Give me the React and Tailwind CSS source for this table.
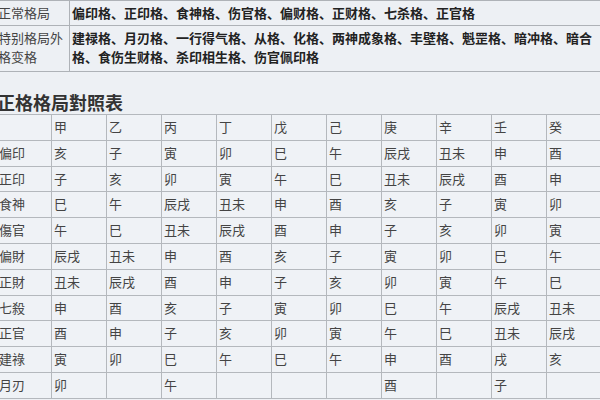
import React from 'react'

const font = { fontFamily: '"Noto Sans CJK SC", "Noto Sans CJK TC", sans-serif' }

const head = ['', '甲', '乙', '丙', '丁', '戊', '己', '庚', '辛', '壬', '癸']

const rows = [
  ['偏印', '亥', '子', '寅', '卯', '巳', '午', '辰戌', '丑未', '申', '酉'],
  ['正印', '子', '亥', '卯', '寅', '午', '巳', '丑未', '辰戌', '酉', '申'],
  ['食神', '巳', '午', '辰戌', '丑未', '申', '酉', '亥', '子', '寅', '卯'],
  ['傷官', '午', '巳', '丑未', '辰戌', '酉', '申', '子', '亥', '卯', '寅'],
  ['偏財', '辰戌', '丑未', '申', '酉', '亥', '子', '寅', '卯', '巳', '午'],
  ['正財', '丑未', '辰戌', '酉', '申', '子', '亥', '卯', '寅', '午', '巳'],
  ['七殺', '申', '酉', '亥', '子', '寅', '卯', '巳', '午', '辰戌', '丑未'],
  ['正官', '酉', '申', '子', '亥', '卯', '寅', '午', '巳', '丑未', '辰戌'],
  ['建祿', '寅', '卯', '巳', '午', '巳', '午', '申', '酉', '戌', '亥'],
  ['月刃', '卯', '', '午', '', '', '', '酉', '', '子', ''],
]

const App = () => {
  return (
    <div className="w-[600px] h-[400px] overflow-hidden bg-[#edf0f4] text-[#444]" style={font}>
      <div className="-ml-[4px] w-[606px]">
        {/* top table */}
        <div className="grid grid-cols-[74px_1fr] border-t border-[#aeb2b7] text-[13px]">
          <div className="h-[25px] pl-[2px] leading-[24px] border-b border-r border-[#aeb2b7]">正常格局</div>
          <div className="h-[25px] pl-[2px] leading-[24px] border-b border-[#aeb2b7] font-bold text-[#222] pr-[4px]">
            偏印格、正印格、食神格、伤官格、偏财格、正财格、七杀格、正官格
          </div>
          <div className="h-[46px] pl-[2px] pr-[2px] pt-[2px] leading-[19px] border-b border-r border-[#aeb2b7]">特别格局外格变格</div>
          <div className="h-[46px] pl-[2px] pr-[2px] pt-[2px] leading-[19px] border-b border-[#aeb2b7] font-bold text-[#222]">
            建禄格、月刃格、一行得气格、从格、化格、两神成象格、丰壁格、魁罡格、暗冲格、暗合格、食伤生财格、杀印相生格、伤官佩印格
          </div>
        </div>

        {/* title */}
        <h2 className="mt-[19px] h-[23px] text-[18px] leading-[22px] font-semibold text-[#333] pl-[1px]">正格格局對照表</h2>

        {/* bottom table */}
        <div className="grid grid-cols-11 auto-rows-[25.8px] border-t border-l border-[#b4b8bd] text-[13px]">
          {[head, ...rows].map((row, i) =>
            row.map((cell, j) => (
              <div
                key={i + '-' + j}
                className="border-r border-b border-[#b4b8bd] pl-[2px] pt-[3px] leading-[17px] text-[#444] bg-[#eff2f6]"
              >
                {cell}
              </div>
            ))
          )}
        </div>
      </div>
    </div>
  )
}

export default App
